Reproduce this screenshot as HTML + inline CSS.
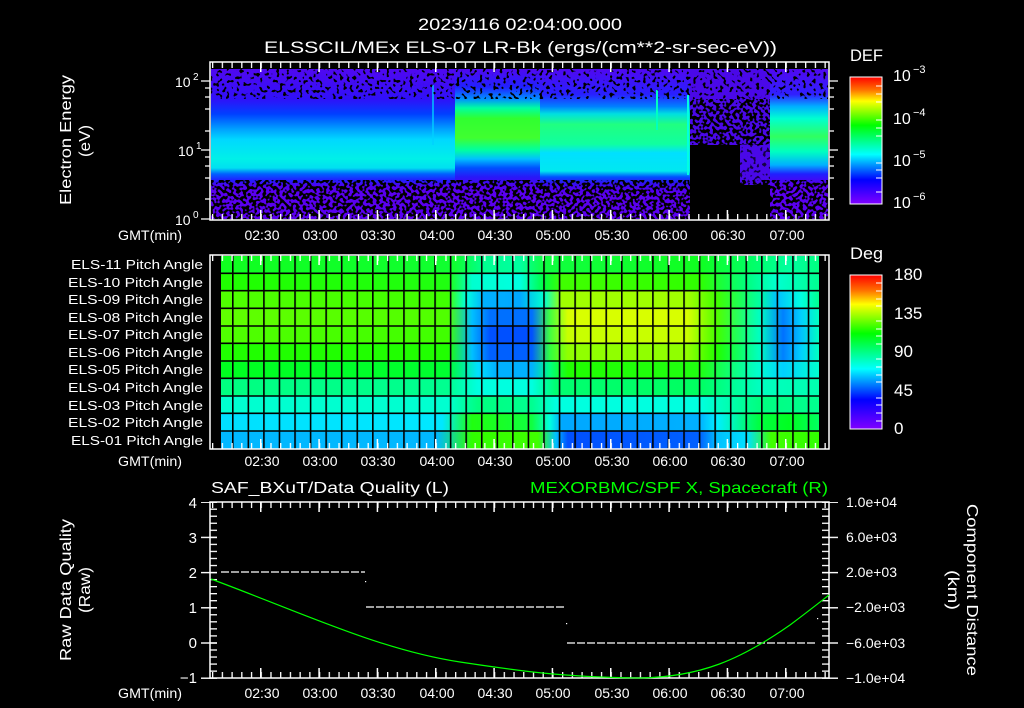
<!DOCTYPE html>
<html><head><meta charset="utf-8"><style>
html,body{margin:0;padding:0;background:#000;width:1024px;height:708px;overflow:hidden}
svg{display:block}
text{font-family:"Liberation Sans",sans-serif;fill:#fff}
</style></head><body>
<svg width="1024" height="708" viewBox="0 0 1024 708" xmlns="http://www.w3.org/2000/svg">
<defs>
<filter id="spk" x="0" y="0" width="1" height="1" filterUnits="objectBoundingBox">
<feTurbulence type="fractalNoise" baseFrequency="0.3 0.3" numOctaves="1" seed="7" result="n"/>
<feColorMatrix in="n" type="matrix" values="0 0 0 0 0  0 0 0 0 0  0 0 0 0 0  14 0 0 0 -6.6"/>
</filter>
<filter id="spk2" x="0" y="0" width="1" height="1" filterUnits="objectBoundingBox">
<feTurbulence type="fractalNoise" baseFrequency="0.3 0.3" numOctaves="1" seed="3" result="n"/>
<feColorMatrix in="n" type="matrix" values="0 0 0 0 0  0 0 0 0 0  0 0 0 0 0  14 0 0 0 -8"/>
</filter>
<pattern id="mt" x="212" y="0" width="9.722" height="708" patternUnits="userSpaceOnUse"><rect x="0" y="0" width="1.3" height="708" fill="#fff"/></pattern>
<pattern id="Mt" x="260" y="0" width="58.333" height="708" patternUnits="userSpaceOnUse"><rect x="0" y="0" width="1.5" height="708" fill="#fff"/></pattern>
<pattern id="vg" x="232" y="0" width="15.56" height="708" patternUnits="userSpaceOnUse"><rect x="0" y="0" width="1.6" height="708" fill="#000"/></pattern>
<pattern id="yt" x="0" y="501.5" width="20" height="7.04" patternUnits="userSpaceOnUse"><rect x="0" y="0" width="20" height="1.3" fill="#fff"/></pattern>
<pattern id="yT" x="0" y="501.5" width="20" height="35.2" patternUnits="userSpaceOnUse"><rect x="0" y="0" width="20" height="1.4" fill="#fff"/></pattern>
<linearGradient id="cb" x1="0" y1="0" x2="0" y2="1">
<stop offset="0" stop-color="#ff0000"/><stop offset=".1" stop-color="#ff7000"/><stop offset=".19" stop-color="#ffff00"/><stop offset=".38" stop-color="#00ff00"/><stop offset=".61" stop-color="#00ffff"/><stop offset=".81" stop-color="#0000ff"/><stop offset="1" stop-color="#8000ff"/></linearGradient>
<linearGradient id="gA" x1="0" y1="69" x2="0" y2="219" gradientUnits="userSpaceOnUse">
<stop offset="0" stop-color="#5008f0"/><stop offset=".2" stop-color="#3010f8"/><stop offset=".3" stop-color="#0040ff"/><stop offset=".4" stop-color="#00a0ff"/><stop offset=".47" stop-color="#00d8ff"/><stop offset=".6" stop-color="#00f0e8"/><stop offset=".66" stop-color="#00e0f0"/><stop offset=".7" stop-color="#0060ff"/><stop offset=".74" stop-color="#2020ff"/><stop offset=".78" stop-color="#5000f0"/><stop offset=".82" stop-color="#5a00f0"/><stop offset="1" stop-color="#5a00f0"/></linearGradient>
<linearGradient id="gC" x1="0" y1="69" x2="0" y2="219" gradientUnits="userSpaceOnUse">
<stop offset="0" stop-color="#5008f0"/><stop offset=".12" stop-color="#2020ff"/><stop offset=".2" stop-color="#0090ff"/><stop offset=".26" stop-color="#00ffa0"/><stop offset=".33" stop-color="#30ff30"/><stop offset=".46" stop-color="#40ff30"/><stop offset=".54" stop-color="#00ffa0"/><stop offset=".6" stop-color="#00c0ff"/><stop offset=".66" stop-color="#0050ff"/><stop offset=".72" stop-color="#2818f8"/><stop offset=".78" stop-color="#5000f0"/><stop offset=".82" stop-color="#5a00f0"/><stop offset="1" stop-color="#5a00f0"/></linearGradient>
<linearGradient id="gD" x1="0" y1="69" x2="0" y2="219" gradientUnits="userSpaceOnUse">
<stop offset="0" stop-color="#5008f0"/><stop offset=".17" stop-color="#2820ff"/><stop offset=".25" stop-color="#0080ff"/><stop offset=".3" stop-color="#00e0e0"/><stop offset=".37" stop-color="#20ff80"/><stop offset=".5" stop-color="#10ffa0"/><stop offset=".56" stop-color="#00e0ff"/><stop offset=".68" stop-color="#00e8f0"/><stop offset=".72" stop-color="#0050ff"/><stop offset=".76" stop-color="#3010f0"/><stop offset=".8" stop-color="#5000f0"/><stop offset=".84" stop-color="#5a00f0"/><stop offset="1" stop-color="#5a00f0"/></linearGradient>
<linearGradient id="gF" x1="0" y1="69" x2="0" y2="219" gradientUnits="userSpaceOnUse">
<stop offset="0" stop-color="#5008f0"/><stop offset=".17" stop-color="#3020ff"/><stop offset=".25" stop-color="#00b0ff"/><stop offset=".33" stop-color="#00ffd0"/><stop offset=".45" stop-color="#30ff60"/><stop offset=".55" stop-color="#00ffc0"/><stop offset=".64" stop-color="#00b0ff"/><stop offset=".7" stop-color="#2020ff"/><stop offset=".76" stop-color="#5000f0"/><stop offset=".8" stop-color="#5a00f0"/><stop offset="1" stop-color="#5a00f0"/></linearGradient>
<linearGradient id="r0" x1="221" x2="819" y1="0" y2="0" gradientUnits="userSpaceOnUse"><stop offset="0" stop-color="#10ff20"/><stop offset=".39" stop-color="#10ff30"/><stop offset=".44" stop-color="#00ff90"/><stop offset=".5" stop-color="#00ffa0"/><stop offset=".54" stop-color="#10ff40"/><stop offset=".8" stop-color="#10ff20"/><stop offset=".9" stop-color="#00ff70"/><stop offset=".95" stop-color="#00ffa0"/><stop offset="1" stop-color="#00ff80"/></linearGradient>
<linearGradient id="r1" x1="221" x2="819" y1="0" y2="0" gradientUnits="userSpaceOnUse"><stop offset="0" stop-color="#20ff00"/><stop offset=".38" stop-color="#20ff10"/><stop offset=".42" stop-color="#00ffd0"/><stop offset=".5" stop-color="#00ffe0"/><stop offset=".54" stop-color="#00ff40"/><stop offset=".57" stop-color="#40ff00"/><stop offset=".8" stop-color="#30ff00"/><stop offset=".88" stop-color="#00ff80"/><stop offset=".93" stop-color="#00ffd0"/><stop offset="1" stop-color="#00ff90"/></linearGradient>
<linearGradient id="r2" x1="221" x2="819" y1="0" y2="0" gradientUnits="userSpaceOnUse"><stop offset="0" stop-color="#50ff00"/><stop offset=".38" stop-color="#40ff00"/><stop offset=".41" stop-color="#00ffe0"/><stop offset=".44" stop-color="#00b0ff"/><stop offset=".5" stop-color="#00a8ff"/><stop offset=".54" stop-color="#00ffd0"/><stop offset=".57" stop-color="#a0ff00"/><stop offset=".78" stop-color="#a0ff00"/><stop offset=".83" stop-color="#40ff00"/><stop offset=".9" stop-color="#00ffa0"/><stop offset=".93" stop-color="#00c0ff"/><stop offset=".97" stop-color="#00ffe0"/><stop offset="1" stop-color="#00ff90"/></linearGradient>
<linearGradient id="r3" x1="221" x2="819" y1="0" y2="0" gradientUnits="userSpaceOnUse"><stop offset="0" stop-color="#60ff00"/><stop offset=".38" stop-color="#50ff00"/><stop offset=".42" stop-color="#00c0ff"/><stop offset=".45" stop-color="#0070ff"/><stop offset=".52" stop-color="#0070ff"/><stop offset=".55" stop-color="#40ff40"/><stop offset=".58" stop-color="#d8ff00"/><stop offset=".78" stop-color="#d8ff00"/><stop offset=".83" stop-color="#50ff00"/><stop offset=".9" stop-color="#00ffc0"/><stop offset=".94" stop-color="#0080ff"/><stop offset=".97" stop-color="#00d0ff"/><stop offset="1" stop-color="#00ffc0"/></linearGradient>
<linearGradient id="r4" x1="221" x2="819" y1="0" y2="0" gradientUnits="userSpaceOnUse"><stop offset="0" stop-color="#50ff00"/><stop offset=".38" stop-color="#40ff00"/><stop offset=".42" stop-color="#00b0ff"/><stop offset=".45" stop-color="#0050ff"/><stop offset=".52" stop-color="#0050ff"/><stop offset=".55" stop-color="#40ff40"/><stop offset=".58" stop-color="#c8ff00"/><stop offset=".78" stop-color="#c8ff00"/><stop offset=".83" stop-color="#40ff00"/><stop offset=".9" stop-color="#00ffc0"/><stop offset=".94" stop-color="#0070ff"/><stop offset=".97" stop-color="#00c0ff"/><stop offset="1" stop-color="#00ffc0"/></linearGradient>
<linearGradient id="r5" x1="221" x2="819" y1="0" y2="0" gradientUnits="userSpaceOnUse"><stop offset="0" stop-color="#20ff00"/><stop offset=".38" stop-color="#20ff00"/><stop offset=".42" stop-color="#00c0ff"/><stop offset=".45" stop-color="#0060ff"/><stop offset=".52" stop-color="#0060ff"/><stop offset=".55" stop-color="#30ff40"/><stop offset=".58" stop-color="#90ff00"/><stop offset=".78" stop-color="#90ff00"/><stop offset=".83" stop-color="#20ff00"/><stop offset=".9" stop-color="#00ffc0"/><stop offset=".94" stop-color="#0080ff"/><stop offset=".97" stop-color="#00d0ff"/><stop offset="1" stop-color="#00ffc0"/></linearGradient>
<linearGradient id="r6" x1="221" x2="819" y1="0" y2="0" gradientUnits="userSpaceOnUse"><stop offset="0" stop-color="#00ff20"/><stop offset=".38" stop-color="#00ff30"/><stop offset=".43" stop-color="#00e0ff"/><stop offset=".46" stop-color="#00b0ff"/><stop offset=".52" stop-color="#00b0ff"/><stop offset=".55" stop-color="#00ff80"/><stop offset=".58" stop-color="#20ff00"/><stop offset=".8" stop-color="#20ff10"/><stop offset=".9" stop-color="#00ffd0"/><stop offset=".94" stop-color="#00d0ff"/><stop offset="1" stop-color="#00ffd0"/></linearGradient>
<linearGradient id="r7" x1="221" x2="819" y1="0" y2="0" gradientUnits="userSpaceOnUse"><stop offset="0" stop-color="#00ff80"/><stop offset=".38" stop-color="#00ff90"/><stop offset=".43" stop-color="#00ffe0"/><stop offset=".52" stop-color="#00ffe0"/><stop offset=".56" stop-color="#00ff70"/><stop offset=".8" stop-color="#00ff60"/><stop offset=".9" stop-color="#00ffc0"/><stop offset="1" stop-color="#00ffb0"/></linearGradient>
<linearGradient id="r8" x1="221" x2="819" y1="0" y2="0" gradientUnits="userSpaceOnUse"><stop offset="0" stop-color="#00ffd0"/><stop offset=".38" stop-color="#00ffd0"/><stop offset=".43" stop-color="#00ff80"/><stop offset=".52" stop-color="#00ff90"/><stop offset=".56" stop-color="#00ffe0"/><stop offset=".8" stop-color="#00ffe0"/><stop offset=".9" stop-color="#00ff80"/><stop offset="1" stop-color="#00ff90"/></linearGradient>
<linearGradient id="r9" x1="221" x2="819" y1="0" y2="0" gradientUnits="userSpaceOnUse"><stop offset="0" stop-color="#00e0ff"/><stop offset=".37" stop-color="#00e8ff"/><stop offset=".42" stop-color="#20ff10"/><stop offset=".52" stop-color="#10ff40"/><stop offset=".55" stop-color="#00ffe0"/><stop offset=".57" stop-color="#00a8ff"/><stop offset=".8" stop-color="#00b0ff"/><stop offset=".83" stop-color="#00f0ff"/><stop offset=".9" stop-color="#00ff40"/><stop offset=".95" stop-color="#00ff20"/><stop offset="1" stop-color="#00ff60"/></linearGradient>
<linearGradient id="r10" x1="221" x2="819" y1="0" y2="0" gradientUnits="userSpaceOnUse"><stop offset="0" stop-color="#00b8ff"/><stop offset=".36" stop-color="#00b8ff"/><stop offset=".42" stop-color="#30ff00"/><stop offset=".53" stop-color="#40ff00"/><stop offset=".56" stop-color="#00c0ff"/><stop offset=".58" stop-color="#0050ff"/><stop offset=".8" stop-color="#0060ff"/><stop offset=".83" stop-color="#00c0ff"/><stop offset=".88" stop-color="#00e0ff"/><stop offset=".92" stop-color="#40ff00"/><stop offset="1" stop-color="#30ff00"/></linearGradient>
</defs>

<text x="418" y="30" font-size="17" textLength="204" lengthAdjust="spacingAndGlyphs">2023/116 02:04:00.000</text>
<text x="264" y="53" font-size="17" textLength="513" lengthAdjust="spacingAndGlyphs">ELSSCIL/MEx ELS-07 LR-Bk  (ergs/(cm**2-sr-sec-eV))</text>

<!-- Top spectrogram -->
<rect x="211" y="69" width="244" height="150" fill="url(#gA)"/>
<rect x="455" y="69" width="85" height="150" fill="url(#gC)"/>
<rect x="540" y="69" width="150" height="150" fill="url(#gD)"/>
<rect x="690" y="69" width="80" height="150" fill="#4a08e8"/>
<rect x="690" y="145" width="50" height="74" fill="#000"/>
<rect x="740" y="185" width="30" height="34" fill="#000"/>
<rect x="770" y="69" width="58" height="150" fill="url(#gF)"/>
<rect x="656" y="90" width="2" height="40" fill="#00ffc0"/>
<rect x="687" y="95" width="2" height="80" fill="#00ffe0"/>
<rect x="432" y="85" width="2" height="60" fill="#00d0ff" opacity=".7"/>
<!-- speckles -->
<rect x="211" y="180" width="617" height="39" fill="#000" filter="url(#spk)"/>
<rect x="211" y="69" width="617" height="30" fill="#000" filter="url(#spk2)"/>
<rect x="690" y="99" width="80" height="46" fill="#000" filter="url(#spk)"/>
<rect x="690" y="145" width="80" height="74" fill="#5000f0" filter="url(#spk2)" opacity=".7"/>
<!-- top frame -->
<rect x="210" y="62" width="619" height="158" fill="none" stroke="#fff" stroke-width="1.5"/>
<rect x="211" y="62" width="617" height="6" fill="url(#mt)"/>
<rect x="211" y="62" width="617" height="10" fill="url(#Mt)"/>
<rect x="211" y="214" width="617" height="6" fill="url(#mt)"/>
<rect x="211" y="210" width="617" height="10" fill="url(#Mt)"/>
<path d="M201 81H210M201 150H210M201 219H210M205 88H210M205 97H210M205 109H210M205 131H210M205 157H210M205 166H210M205 178H210M205 199H210M829 81H838M829 150H838M829 88H834M829 97H834M829 109H834M829 131H834M829 157H834M829 166H834M829 178H834M829 199H834" stroke="#fff" stroke-width="1.3"/>
<text x="175" y="87" font-size="14">10</text><text x="193" y="80" font-size="10">2</text>
<text x="178" y="156" font-size="14">10</text><text x="196" y="149" font-size="10">1</text>
<text x="175" y="225" font-size="14">10</text><text x="193" y="218" font-size="10">0</text>
<text transform="translate(71,140) rotate(-90)" font-size="16" text-anchor="middle" textLength="130" lengthAdjust="spacingAndGlyphs">Electron Energy</text>
<text transform="translate(90,141) rotate(-90)" font-size="16" text-anchor="middle" textLength="32" lengthAdjust="spacingAndGlyphs">(eV)</text>
<text x="850" y="61" font-size="17" textLength="33" lengthAdjust="spacingAndGlyphs">DEF</text>
<rect x="850" y="77" width="32" height="127" fill="url(#cb)" stroke="#fff" stroke-width="1"/>
<path d="M876 86H882M876 94H882M876 102H882M876 120H882M876 128H882M876 136H882M876 163H882M876 170H882M876 178H882M876 192H882" stroke="#fff" stroke-width="1"/>
<text x="893" y="81" font-size="16">10</text><text x="913" y="73" font-size="11">−3</text>
<text x="893" y="124" font-size="16">10</text><text x="913" y="116" font-size="11">−4</text>
<text x="893" y="166" font-size="16">10</text><text x="913" y="158" font-size="11">−5</text>
<text x="893" y="208" font-size="16">10</text><text x="913" y="200" font-size="11">−6</text>

<g font-size="14" text-anchor="middle">
<text x="118" y="240" text-anchor="start" textLength="64" lengthAdjust="spacingAndGlyphs">GMT(min)</text>
<text x="262" y="240">02:30</text><text x="320" y="240">03:00</text><text x="378" y="240">03:30</text><text x="437" y="240">04:00</text><text x="495" y="240">04:30</text><text x="553" y="240">05:00</text><text x="612" y="240">05:30</text><text x="670" y="240">06:00</text><text x="728" y="240">06:30</text><text x="787" y="240">07:00</text>
<text x="118" y="466" text-anchor="start" textLength="64" lengthAdjust="spacingAndGlyphs">GMT(min)</text>
<text x="262" y="466">02:30</text><text x="320" y="466">03:00</text><text x="378" y="466">03:30</text><text x="437" y="466">04:00</text><text x="495" y="466">04:30</text><text x="553" y="466">05:00</text><text x="612" y="466">05:30</text><text x="670" y="466">06:00</text><text x="728" y="466">06:30</text><text x="787" y="466">07:00</text>
<text x="118" y="698" text-anchor="start" textLength="64" lengthAdjust="spacingAndGlyphs">GMT(min)</text>
<text x="262" y="698">02:30</text><text x="320" y="698">03:00</text><text x="378" y="698">03:30</text><text x="437" y="698">04:00</text><text x="495" y="698">04:30</text><text x="553" y="698">05:00</text><text x="612" y="698">05:30</text><text x="670" y="698">06:00</text><text x="728" y="698">06:30</text><text x="787" y="698">07:00</text>
</g>

<!-- Middle pitch panel -->
<rect x="221" y="256" width="598" height="17.5" fill="url(#r0)"/>
<rect x="221" y="273.3" width="598" height="17.5" fill="url(#r1)"/>
<rect x="221" y="290.7" width="598" height="17.7" fill="url(#r2)"/>
<rect x="221" y="308.3" width="598" height="17.7" fill="url(#r3)"/>
<rect x="221" y="326" width="598" height="17.4" fill="url(#r4)"/>
<rect x="221" y="343.3" width="598" height="17.7" fill="url(#r5)"/>
<rect x="221" y="361" width="598" height="17.4" fill="url(#r6)"/>
<rect x="221" y="378.3" width="598" height="17.7" fill="url(#r7)"/>
<rect x="221" y="396" width="598" height="17.4" fill="url(#r8)"/>
<rect x="221" y="413.3" width="598" height="17.7" fill="url(#r9)"/>
<rect x="221" y="431" width="598" height="17.5" fill="url(#r10)"/>
<rect x="232" y="256" width="587" height="193" fill="url(#vg)"/>
<path d="M221 273.3H819M221 290.7H819M221 308.3H819M221 326H819M221 343.3H819M221 361H819M221 378.3H819M221 396H819M221 413.3H819M221 431H819" stroke="#000" stroke-width="1.6"/>
<rect x="210" y="255" width="619" height="194" fill="none" stroke="#fff" stroke-width="1.5"/>
<rect x="211" y="255" width="617" height="6" fill="url(#mt)"/>
<rect x="211" y="255" width="617" height="10" fill="url(#Mt)"/>
<rect x="211" y="443" width="617" height="6" fill="url(#mt)"/>
<rect x="211" y="439" width="617" height="10" fill="url(#Mt)"/>
<g font-size="13" text-anchor="end">
<text x="203" y="269" textLength="132" lengthAdjust="spacingAndGlyphs">ELS-11 Pitch Angle</text>
<text x="203" y="287" textLength="135" lengthAdjust="spacingAndGlyphs">ELS-10 Pitch Angle</text>
<text x="203" y="304" textLength="135" lengthAdjust="spacingAndGlyphs">ELS-09 Pitch Angle</text>
<text x="203" y="322" textLength="135" lengthAdjust="spacingAndGlyphs">ELS-08 Pitch Angle</text>
<text x="203" y="339" textLength="135" lengthAdjust="spacingAndGlyphs">ELS-07 Pitch Angle</text>
<text x="203" y="357" textLength="135" lengthAdjust="spacingAndGlyphs">ELS-06 Pitch Angle</text>
<text x="203" y="374" textLength="135" lengthAdjust="spacingAndGlyphs">ELS-05 Pitch Angle</text>
<text x="203" y="392" textLength="135" lengthAdjust="spacingAndGlyphs">ELS-04 Pitch Angle</text>
<text x="203" y="410" textLength="135" lengthAdjust="spacingAndGlyphs">ELS-03 Pitch Angle</text>
<text x="203" y="427" textLength="135" lengthAdjust="spacingAndGlyphs">ELS-02 Pitch Angle</text>
<text x="203" y="445" textLength="132" lengthAdjust="spacingAndGlyphs">ELS-01 Pitch Angle</text>
</g>
<text x="850" y="259" font-size="17" textLength="33" lengthAdjust="spacingAndGlyphs">Deg</text>
<rect x="850" y="275" width="32" height="154" fill="url(#cb)" stroke="#fff" stroke-width="1"/>
<path d="M876 283H882M876 291H882M876 299H882M876 306H882M876 321H882M876 329H882M876 336H882M876 344H882M876 359H882M876 367H882M876 375H882M876 382H882M876 398H882M876 405H882M876 413H882M876 421H882" stroke="#fff" stroke-width="1"/>
<g font-size="17"><text x="894" y="280">180</text><text x="894" y="319">135</text><text x="894" y="357">90</text><text x="894" y="396">45</text><text x="894" y="434">0</text></g>

<!-- Bottom panel -->
<text x="211" y="493" font-size="16" textLength="238" lengthAdjust="spacingAndGlyphs">SAF_BXuT/Data Quality (L)</text>
<text x="530" y="493" font-size="16" style="fill:#00ff00" textLength="298" lengthAdjust="spacingAndGlyphs">MEXORBMC/SPF X, Spacecraft (R)</text>
<rect x="210" y="502" width="619" height="176" fill="none" stroke="#fff" stroke-width="1.5"/>
<rect x="211" y="502" width="617" height="6" fill="url(#mt)"/>
<rect x="211" y="502" width="617" height="10" fill="url(#Mt)"/>
<rect x="211" y="672" width="617" height="6" fill="url(#mt)"/>
<rect x="211" y="668" width="617" height="10" fill="url(#Mt)"/>
<rect x="210" y="502" width="7" height="176" fill="url(#yt)"/>
<rect x="201" y="502" width="16" height="177" fill="url(#yT)"/>
<rect x="822" y="502" width="7" height="176" fill="url(#yt)"/>
<rect x="822" y="502" width="16" height="177" fill="url(#yT)"/>
<g font-size="15" text-anchor="end"><text x="197" y="508">4</text><text x="197" y="543">3</text><text x="197" y="578">2</text><text x="197" y="613">1</text><text x="197" y="648">0</text><text x="197" y="683">−1</text></g>
<g font-size="14"><text x="846" y="507">1.0e+04</text><text x="846" y="542">6.0e+03</text><text x="846" y="577">2.0e+03</text><text x="846" y="612">−2.0e+03</text><text x="846" y="648">−6.0e+03</text><text x="846" y="683">−1.0e+04</text></g>
<text transform="translate(71,590) rotate(-90)" font-size="16" text-anchor="middle" textLength="142" lengthAdjust="spacingAndGlyphs">Raw Data Quality</text>
<text transform="translate(90,590) rotate(-90)" font-size="16" text-anchor="middle" textLength="46" lengthAdjust="spacingAndGlyphs">(Raw)</text>
<text transform="translate(967,590) rotate(90)" font-size="16" text-anchor="middle" textLength="172" lengthAdjust="spacingAndGlyphs">Component Distance</text>
<text transform="translate(948,590) rotate(90)" font-size="16" text-anchor="middle" textLength="40" lengthAdjust="spacingAndGlyphs">(km)</text>
<path d="M221 572H365M366 607H565M567 643H817" stroke="#fff" stroke-width="1.2" stroke-dasharray="8,2"/>
<rect x="365" y="581" width="1.2" height="1.2" fill="#fff"/><rect x="566" y="623" width="1.2" height="1.2" fill="#fff"/><rect x="817" y="618" width="1.2" height="1.2" fill="#fff"/>
<path d="M211 579C300 612 380 650 460 662C520 671 560 677 640 678C700 677 740 660 790 625C810 610 820 602 829 595" fill="none" stroke="#00ff00" stroke-width="1.2"/>
</svg>
</body></html>
